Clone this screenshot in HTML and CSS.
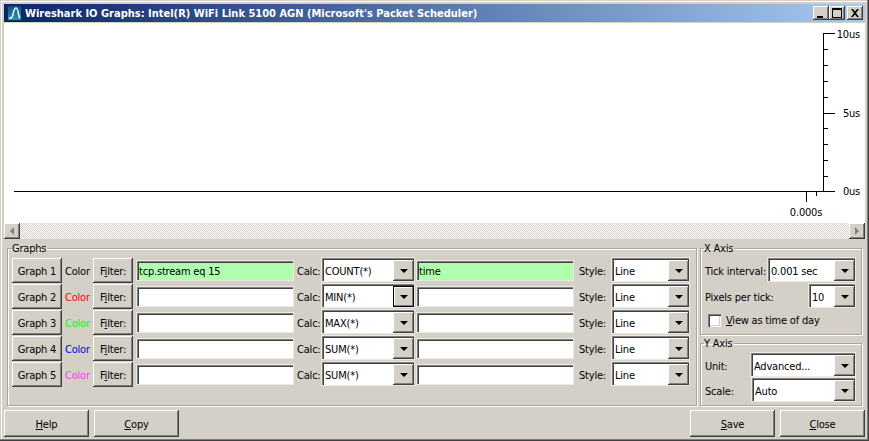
FILE: index.html
```html
<!DOCTYPE html>
<html lang="en">

<head>
    <meta charset="UTF-8">
    <meta name="viewport" content="width=device-width, initial-scale=1.0">
    <title>Wireshark IO Graphs</title>
    <link rel="stylesheet" href="styles.css">
</head>

<body>
<div class="window">
    <div class="titlebar">
        <svg class="app-icon" width="15" height="16" viewBox="0 0 15 16">
            <defs>
                <linearGradient id="iconFill" x1="0" y1="0" x2="0" y2="1">
                    <stop offset="0" stop-color="#0e4a78"/>
                    <stop offset="1" stop-color="#2f9ab8"/>
                </linearGradient>
            </defs>
            <rect width="15" height="16" fill="url(#iconFill)"/>
            <rect x="0.5" y="0.5" width="14" height="15" fill="none" stroke="#0a2f55"/>
            <path d="M2 13h2C6.500 13 6 3 9 3c2.500 0 2 8.500 4 10" fill="none" stroke="#eef7fb" stroke-width="1.500"/>
        </svg>
        <span class="title-text">Wireshark IO Graphs: Intel(R) WiFi Link 5100 AGN (Microsoft's Packet Scheduler)</span>
        <div class="caption-buttons">
            <span class="caption-btn"><svg width="16" height="14" viewBox="0 0 16 14"><path d="M4 10h6v2H4z"/></svg></span>
            <span class="caption-btn"><svg width="16" height="14" viewBox="0 0 16 14"><path d="M3 2h10v10H3zM4 4v7h8V4z" fill-rule="evenodd"/></svg></span>
            <span class="caption-btn caption-close"><svg width="16" height="14" viewBox="0 0 16 14"><path d="M4 3h2l2 2.500L10 3h2L9 7l3 4h-2L8 8.500 6 11H4l3-4z"/></svg></span>
        </div>
    </div>

    <svg class="plot" width="861" height="200" viewBox="4 23 861 200" shape-rendering="crispEdges">
        <g stroke="#000" fill="none">
            <path d="M14 191.500H823.500V33.500"/>
            <path d="M823 33.500h12M823 113.500h12M823 191.500h12"/>
            <path d="M823 49.500h5M823 65.500h5M823 81.500h5M823 97.500h5M823 128.500h5M823 144.500h5M823 160.500h5M823 176.500h5"/>
            <path d="M806.500 191v11M816.500 191v5"/>
        </g>
        <g class="plot-label">
            <text x="860" y="38" text-anchor="end">10us</text>
            <text x="860" y="117" text-anchor="end">5us</text>
            <text x="860" y="195" text-anchor="end">0us</text>
            <text x="806" y="216" text-anchor="middle">0.000s</text>
        </g>
    </svg>

    <div class="hscroll">
        <span class="scroll-btn"><i class="arrow-left"></i></span>
        <span class="scroll-track"></span>
        <span class="scroll-btn"><i class="arrow-right"></i></span>
    </div>

    <div class="panel">
        <fieldset class="group graphs">
            <legend>Graphs</legend>
            <div class="graph-row">
                <button class="btn graph-btn">Graph 1</button>
                <span class="color-label">Color</span>
                <button class="btn filter-btn">F<u>i</u>lter:</button>
                <input class="field field-ok" type="text" value="tcp.stream eq 15">
                <span class="calc-label">Calc:</span>
                <div class="combo calc-combo"><span>COUNT(*)</span><b class="combo-btn"></b></div>
                <input class="field field-ok calc-field" type="text" value="time">
                <span class="style-label">Style:</span>
                <div class="combo style-combo"><span>Line</span><b class="combo-btn"></b></div>
            </div>
            <div class="graph-row">
                <button class="btn graph-btn">Graph 2</button>
                <span class="color-label red">Color</span>
                <button class="btn filter-btn">F<u>i</u>lter:</button>
                <input class="field" type="text">
                <span class="calc-label">Calc:</span>
                <div class="combo calc-combo"><span>MIN(*)</span><b class="combo-btn focused"></b></div>
                <input class="field calc-field" type="text">
                <span class="style-label">Style:</span>
                <div class="combo style-combo"><span>Line</span><b class="combo-btn"></b></div>
            </div>
            <div class="graph-row">
                <button class="btn graph-btn">Graph 3</button>
                <span class="color-label green">Color</span>
                <button class="btn filter-btn">F<u>i</u>lter:</button>
                <input class="field" type="text">
                <span class="calc-label">Calc:</span>
                <div class="combo calc-combo"><span>MAX(*)</span><b class="combo-btn"></b></div>
                <input class="field calc-field" type="text">
                <span class="style-label">Style:</span>
                <div class="combo style-combo"><span>Line</span><b class="combo-btn"></b></div>
            </div>
            <div class="graph-row">
                <button class="btn graph-btn">Graph 4</button>
                <span class="color-label blue">Color</span>
                <button class="btn filter-btn">F<u>i</u>lter:</button>
                <input class="field" type="text">
                <span class="calc-label">Calc:</span>
                <div class="combo calc-combo"><span>SUM(*)</span><b class="combo-btn"></b></div>
                <input class="field calc-field" type="text">
                <span class="style-label">Style:</span>
                <div class="combo style-combo"><span>Line</span><b class="combo-btn"></b></div>
            </div>
            <div class="graph-row">
                <button class="btn graph-btn">Graph 5</button>
                <span class="color-label pink">Color</span>
                <button class="btn filter-btn">F<u>i</u>lter:</button>
                <input class="field" type="text">
                <span class="calc-label">Calc:</span>
                <div class="combo calc-combo"><span>SUM(*)</span><b class="combo-btn"></b></div>
                <input class="field calc-field" type="text">
                <span class="style-label">Style:</span>
                <div class="combo style-combo"><span>Line</span><b class="combo-btn"></b></div>
            </div>
        </fieldset>

        <div class="axis-column">
            <fieldset class="group x-axis">
                <legend>X Axis</legend>
                <div class="axis-row">
                    <span>Tick interval:</span>
                    <div class="combo tick-combo"><span>0.001 sec</span><b class="combo-btn"></b></div>
                </div>
                <div class="axis-row">
                    <span>Pixels per tick:</span>
                    <div class="combo pixels-combo"><span>10</span><b class="combo-btn"></b></div>
                </div>
                <label class="check-row"><i class="check-box"></i><span><u>V</u>iew as time of day</span></label>
            </fieldset>
            <fieldset class="group y-axis">
                <legend>Y Axis</legend>
                <div class="axis-row">
                    <span>Unit:</span>
                    <div class="combo unit-combo"><span>Advanced...</span><b class="combo-btn"></b></div>
                </div>
                <div class="axis-row">
                    <span>Scale:</span>
                    <div class="combo scale-combo"><span>Auto</span><b class="combo-btn"></b></div>
                </div>
            </fieldset>
        </div>
    </div>

    <div class="actions">
        <button class="btn action-btn"><u>H</u>elp</button>
        <button class="btn action-btn"><u>C</u>opy</button>
        <span class="spacer"></span>
        <button class="btn action-btn"><u>S</u>ave</button>
        <button class="btn action-btn"><u>C</u>lose</button>
    </div>
</div>
</body>

</html>
```

FILE: styles.css
```css
html,
body {
    margin: 0;
    padding: 0;
    background-color: #d4d0c8;
}

body,
button,
input {
    font-family: 'DejaVu Sans Condensed', 'DejaVu Sans', sans-serif;
    font-size: 11px;
    letter-spacing: -0.2px;
    color: #000;
}

.window {
    width: 869px;
    height: 441px;
    box-sizing: border-box;
    padding: 4px;
    display: flex;
    flex-direction: column;
    background-color: #d4d0c8;
    overflow: hidden;
    box-shadow: inset -1px -1px 0 #404040, inset -2px -2px 0 #808080, inset 1px 1px 0 #d4d0c8, inset 2px 2px 0 #fff;
}

.titlebar {
    height: 18px;
    flex: none;
    display: flex;
    align-items: center;
    background: linear-gradient(to right, #0a246a, #a6caf0);
    margin-bottom: 1px;
}

.app-icon {
    margin: 0 3px 0 3px;
    flex: none;
}

.title-text {
    color: #fff;
    font-weight: bold;
    font-size: 11px;
    letter-spacing: 0;
    white-space: nowrap;
}

.caption-buttons {
    margin-left: auto;
    margin-right: 2px;
    display: flex;
}

.caption-btn {
    width: 16px;
    height: 14px;
    display: block;
    background-color: #d4d0c8;
    box-shadow: inset -1px -1px 0 #404040, inset 1px 1px 0 #fff, inset -2px -2px 0 #808080;
}

.caption-btn svg {
    display: block;
}

.caption-close {
    margin-left: 2px;
}

.plot {
    display: block;
    flex: none;
    background-color: #fff;
}

.plot-label text {
    font-family: 'DejaVu Sans Condensed', 'DejaVu Sans', sans-serif;
    font-size: 11px;
    letter-spacing: -0.2px;
    fill: #000;
}

.hscroll {
    height: 16px;
    flex: none;
    display: flex;
}

.scroll-track {
    flex: 1;
    background: conic-gradient(#d4d0c8 25%, #fff 0 50%, #d4d0c8 0 75%, #fff 0) 0 0 / 2px 2px;
}

.scroll-btn {
    width: 16px;
    height: 16px;
    display: flex;
    align-items: center;
    justify-content: center;
    background-color: #d4d0c8;
    box-shadow: inset -1px -1px 0 #404040, inset 1px 1px 0 #fff, inset -2px -2px 0 #808080;
}

.arrow-left,
.arrow-right {
    width: 0;
    height: 0;
    border-top: 4px solid transparent;
    border-bottom: 4px solid transparent;
}

.arrow-left {
    border-right: 4px solid #808080;
}

.arrow-right {
    border-left: 4px solid #808080;
}

.panel {
    flex: none;
    height: 171px;
    box-sizing: border-box;
    padding: 3px 3px 0 3px;
    display: flex;
    gap: 3px;
}

.group {
    margin: 0;
    min-width: 0;
    box-sizing: border-box;
    border: 1px solid #a8a59e;
    box-shadow: 1px 1px 0 #fff, inset 1px 1px 0 #fff;
    padding: 3px 0 0 4px;
}

.group legend {
    padding: 0 1px 0 0;
    margin-left: -1px;
    line-height: 13px;
    height: 13px;
}

.graphs {
    width: 690px;
    height: 164px;
}

.graphs legend {
    margin-left: 0;
}

.graph-row {
    height: 26px;
    display: flex;
    align-items: flex-start;
}

.btn {
    margin: 0;
    padding: 2px 0 0 0;
    border: none;
    background-color: #d4d0c8;
    box-shadow: inset -1px -1px 0 #404040, inset 1px 1px 0 #fff, inset -2px -2px 0 #808080;
    white-space: nowrap;
}

.graph-btn {
    width: 50px;
    height: 25px;
    flex: none;
}

.color-label {
    width: 28px;
    padding-left: 3px;
    line-height: 27px;
    flex: none;
}

.red {
    color: #f00;
}

.green {
    color: #0f0;
}

.blue {
    color: #00f;
}

.pink {
    color: #f3f;
}

.filter-btn {
    width: 40px;
    height: 25px;
    flex: none;
}

.field {
    width: 158px;
    height: 21px;
    box-sizing: border-box;
    margin: 2px 0 0 3px;
    padding: 2px 0 0 3px;
    border: none;
    outline: none;
    flex: none;
    background-color: #fff;
    box-shadow: inset 0 0 0 1px #ece9e3, inset 2px 2px 0 #808080, inset 3px 3px 0 #404040;
}

.field-ok {
    background-color: #afffaf;
}

.calc-field {
    margin-left: 1px;
}

.calc-label {
    width: 24px;
    padding-left: 3px;
    line-height: 27px;
    flex: none;
}

.style-label {
    width: 32px;
    padding-left: 5px;
    line-height: 27px;
    flex: none;
}

.combo {
    height: 25px;
    box-sizing: border-box;
    margin-top: -1px;
    padding: 3px 1px 1px 4px;
    flex: none;
    display: flex;
    align-items: center;
    justify-content: space-between;
    background-color: #fff;
    box-shadow: inset 0 0 0 1px #ece9e3, inset 2px 2px 0 #808080, inset 3px 3px 0 #404040;
}

.combo span {
    padding-top: 2px;
}

.combo-btn {
    width: 21px;
    height: 21px;
    flex: none;
    display: flex;
    align-items: center;
    justify-content: center;
    background-color: #d4d0c8;
    box-shadow: inset -1px -1px 0 #404040, inset 1px 1px 0 #fff, inset -2px -2px 0 #808080;
}

.combo-btn::before {
    content: "";
    width: 0;
    height: 0;
    border-left: 4px solid transparent;
    border-right: 4px solid transparent;
    border-top: 4px solid #000;
}

.combo-btn.focused {
    box-shadow: inset 0 0 0 1px #000, inset -2px -2px 0 #808080, inset 2px 2px 0 #fff;
}

.calc-combo {
    width: 94px;
}

.style-combo {
    width: 79px;
}

.axis-column {
    width: 162px;
    display: flex;
    flex-direction: column;
    gap: 2px;
}

.x-axis {
    height: 93px;
}

.y-axis {
    height: 69px;
}

.axis-row {
    display: flex;
    align-items: flex-start;
    justify-content: space-between;
    padding-right: 5px;
    height: 26px;
    line-height: 27px;
}

.y-axis .axis-row {
    height: 25px;
}

.axis-row .combo {
    line-height: normal;
}

.tick-combo {
    width: 89px;
}

.pixels-combo {
    width: 48px;
}

.unit-combo {
    width: 106px;
}

.scale-combo {
    width: 105px;
}

.check-row {
    display: flex;
    align-items: center;
    height: 20px;
    padding-left: 3px;
}

.check-box {
    width: 13px;
    height: 13px;
    margin-right: 5px;
    background-color: #fff;
    box-shadow: inset 1px 1px 0 #808080, inset 2px 2px 0 #404040, inset -1px -1px 0 #fff, inset -2px -2px 0 #d4d0c8;
}

.actions {
    height: 27px;
    flex: none;
    display: flex;
    gap: 5px;
}

.action-btn {
    width: 85px;
    height: 27px;
}

.spacer {
    flex: 1;
}
```
